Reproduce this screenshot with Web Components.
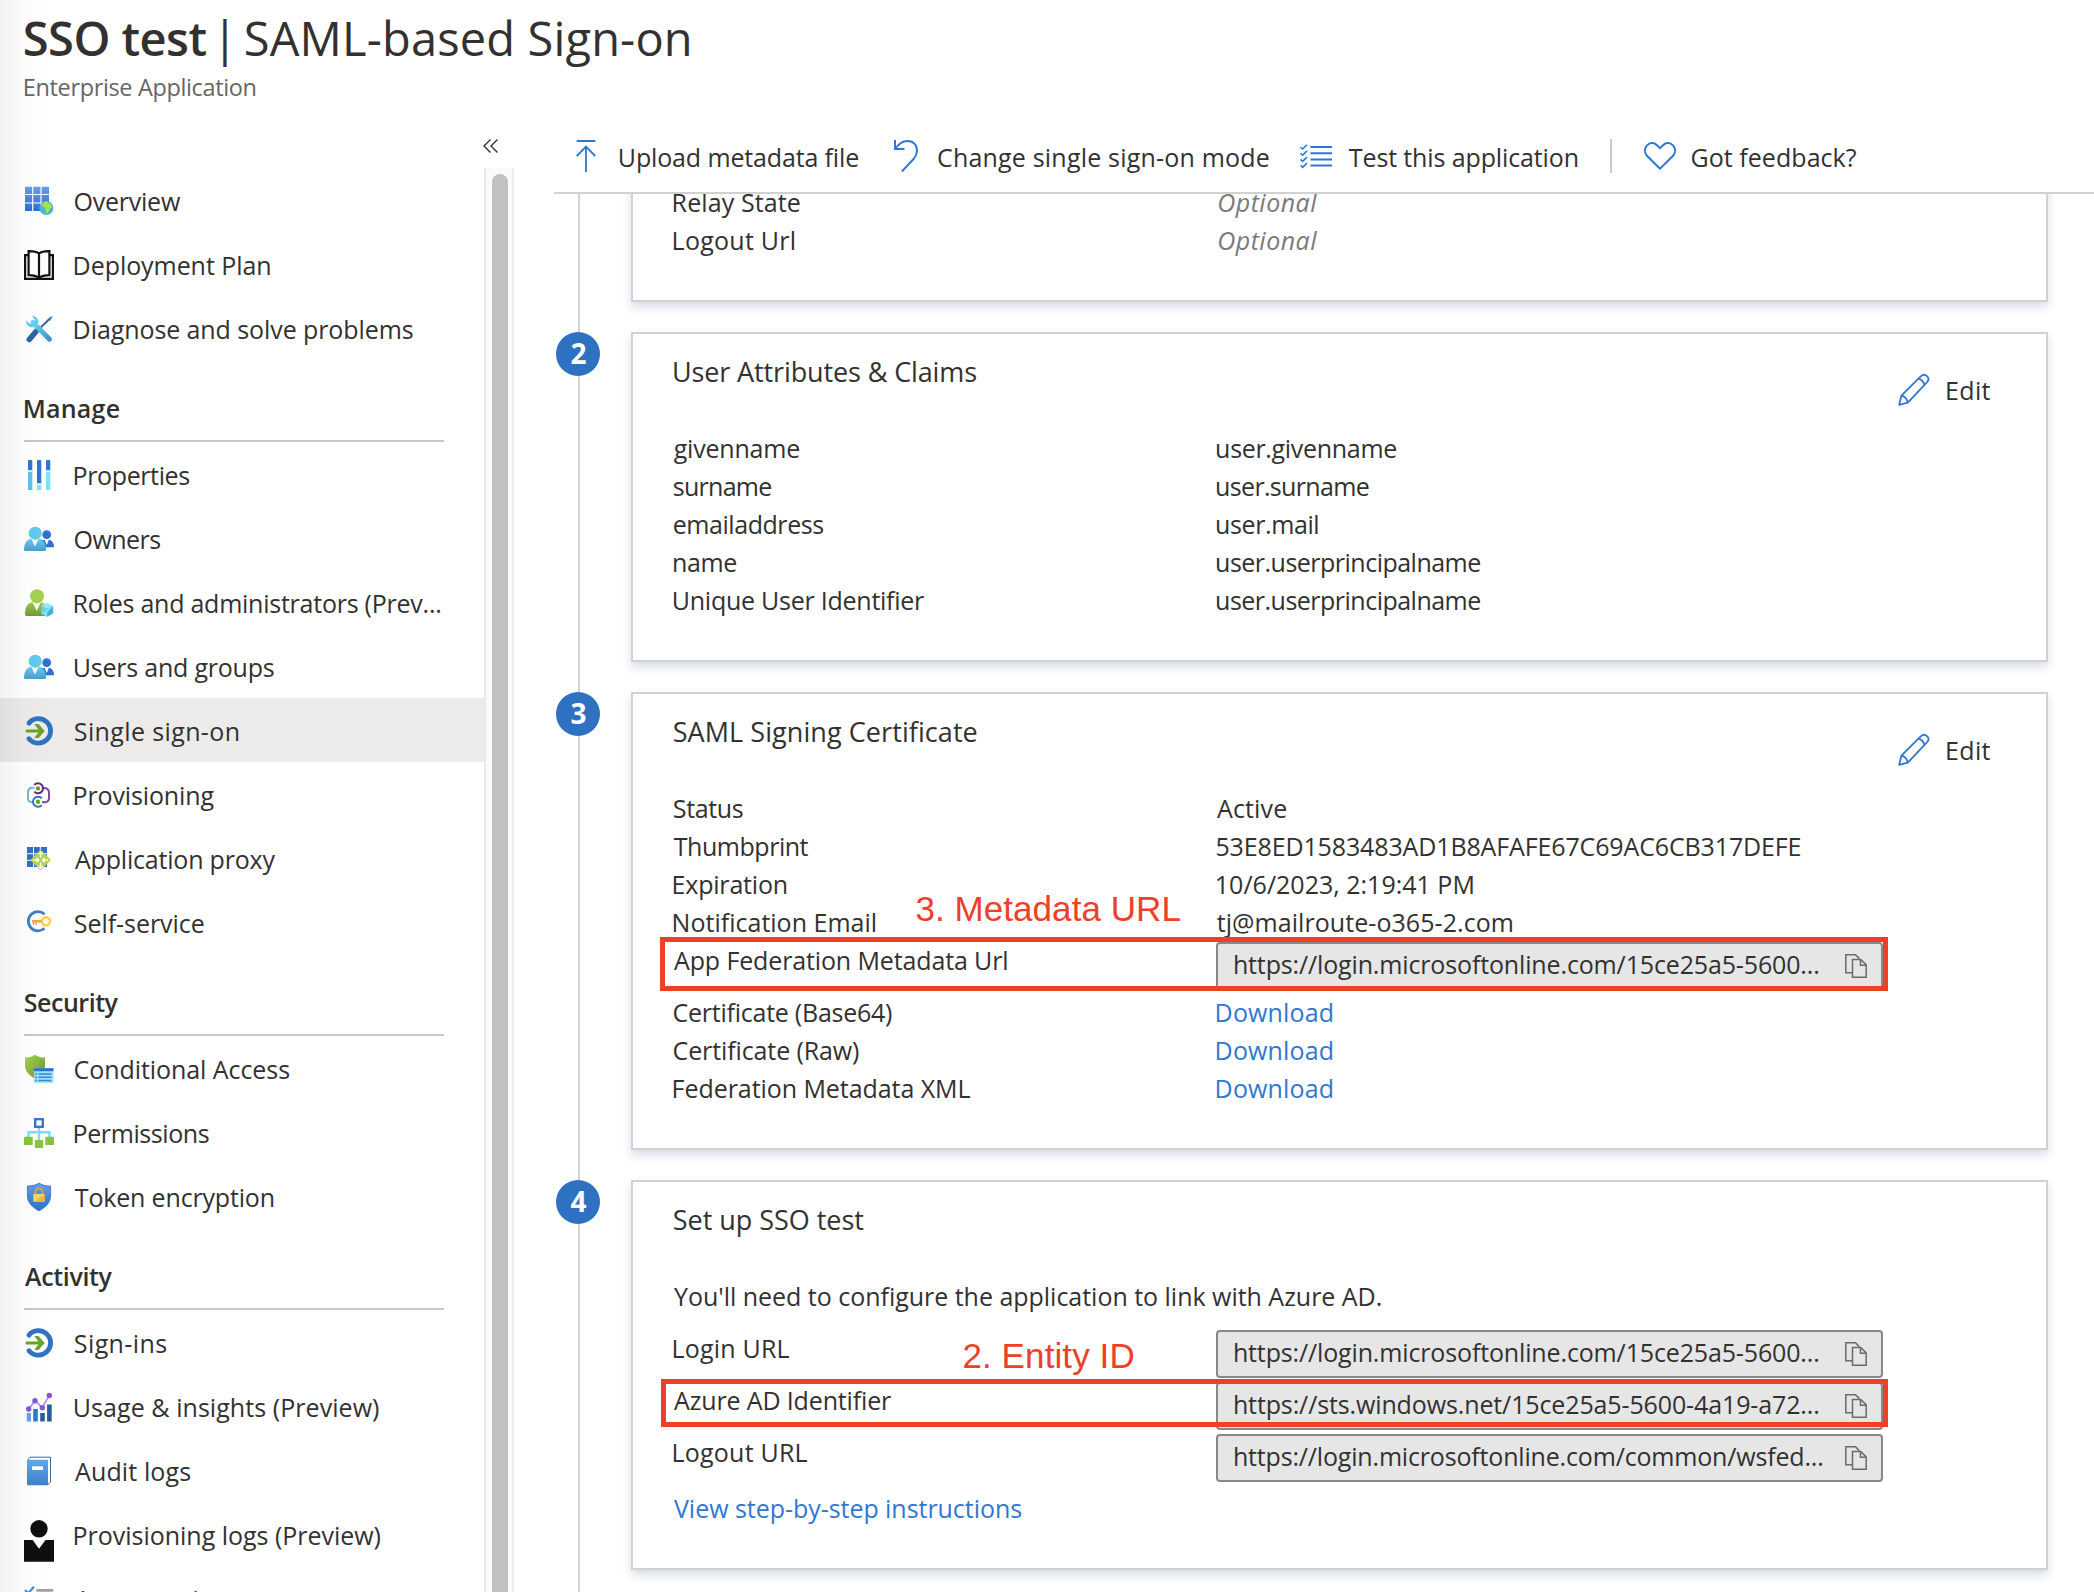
<!DOCTYPE html>
<html lang="en">
<head>
<meta charset="utf-8">
<title>SSO test | SAML-based Sign-on</title>
<style>
  html, body { margin: 0; padding: 0; background: #fff; }
  body { width: 2094px; height: 1592px; overflow: hidden; font: 400 25px/38px "Open Sans", "Noto Sans", sans-serif; color: #323130; }
</style>
</head>
<body>
<portal-blade></portal-blade>
<script>
const ICONS = {
  overview: `<defs><linearGradient id="g" x2="0" y2="1"><stop offset="0" stop-color="#6a9fea"/><stop offset="1" stop-color="#2c6fcb"/></linearGradient></defs>
    <path fill="url(#g)" d="M2 .7h22.500q.5 0 .5.5V24.500q0 .5-.5.5H1.500q-.5 0-.5-.5V1.200q0-.5.5-.5z"/>
    <path stroke="#fff" stroke-width="1.200" d="M8.700 0v26M17 0v26M0 8.500h26M0 17h26"/>
    <circle cx="22.400" cy="22" r="7" fill="#4bb4dc"/>
    <path fill="#a9e14b" d="M17.500 19c1-2 3-3.500 5-3.700 1.500.5 1 1.500 2.500 2 2 .7 3 2 3 3.700-.5 1.500-2 1-2.500 2.500-.3 2-1.500 3.500-3 4-.8-1-.5-2.500-1-3.500-.6-1.200-.2-2.500-1.500-3-.9-.5-2-.7-2.500-2z"/>`,
  book: `<g fill="none" stroke="#111" stroke-width="2.200"><path d="M4.500 5.200H1.100v23.600h27.800V5.200h-3.400"/><path d="M15 3.500C12.500 1.500 9 1 4.600 1.100v24C9 25.100 12.500 25.800 15 28c2.500-2.200 6-2.900 10.400-2.900v-24C21 1 17.500 1.500 15 3.500zV28"/></g>`,
  tools: `<defs><linearGradient id="w" x2="1" y2="1"><stop offset="0" stop-color="#6fd8f7"/><stop offset="1" stop-color="#3f94c4"/></linearGradient></defs>
    <path stroke="#2b5ea0" stroke-width="1.800" fill="none" d="M13 17 26.500 4"/><path fill="#3d86c4" d="M24 4.800 28 1.900l.5.5L26.300 7z"/>
    <path stroke="#2b62ab" stroke-width="5.500" stroke-linecap="round" d="M5.300 25.500 12 17.500"/>
    <path stroke="url(#w)" stroke-width="5" stroke-linecap="round" d="M9 8.500 25.500 25.200"/>
    <path fill="#66cdf0" d="M2.200 6.500C2 11 5 14 9.500 13.200l5-4.200C14.500 4.500 12.200 2 8 2.200L11 6 9.600 9.200 6 9.800z"/>`,
  props: `<g fill="#2f74cf"><rect x="4" width="4.300" height="10.500" rx="1"/><rect x="13" width="4.300" height="23.500" rx="1"/><rect x="22" width="4.300" height="10.500" rx="1"/></g>
    <path fill="#d9d9d9" d="M3.500 10h5.300v1.600H3.500zM12.500 23h5.300v1.600h-5.300zM21.500 10h5.300v1.600h-5.300z"/>
    <path fill="#62c3e4" d="M4 12h4.300v18H4z"/><path fill="#7be2fb" d="M13 25.200h4.300V30H13zM22 12h4.300v18H22z"/>`,
  people: `<defs><linearGradient id="p" x2="0" y2="1"><stop offset="0" stop-color="#66cdf0"/><stop offset="1" stop-color="#4a9cc8"/></linearGradient></defs>
    <circle cx="22.700" cy="10.700" r="4.400" fill="#2f72cc"/><path fill="#2f72cc" d="M16 16h10c2.600 1 4 4 4 6.500 0 .5-.3.8-.8.8H16z"/><path fill="#fff" d="m20.500 16 2.300 5 2-5z"/>
    <path fill="url(#p)" d="M5.500 15h11c3.500 1.500 5.500 6 5.500 10.500 0 1-.5 1.500-1.500 1.500h-19C.5 27 0 26.500 0 25.500 0 21 2 16.500 5.500 15z"/>
    <path fill="#fff" d="M7.300 14.500 11 22.500l3.700-8z"/><circle cx="11.200" cy="9.200" r="6.500" fill="#62c9ec"/>`,
  roles: `<defs><linearGradient id="r" x2="0" y2="1"><stop offset="0" stop-color="#9ac84a"/><stop offset="1" stop-color="#6d9a37"/></linearGradient></defs>
    <path fill="url(#r)" d="M6.500 14.500h12c3.500 1.500 5.500 6 5.500 11.500 0 1.300-.5 2-1.800 2H2.600C1.500 28 1 27.300 1 26 1 20.500 3 16 6.500 14.500z"/>
    <path fill="#fff" d="M8.500 14 12.700 23 17 14z"/><circle cx="13" cy="8.200" r="7" fill="#a3d14d"/>
    <path fill="#9be7fa" d="m23.200 14.800 6 3-6 3-6-3z"/><path fill="#66cfea" d="M17.200 18v7.500l6 3.200v-7.900z"/><path fill="#3fb2da" d="M29.200 18v7.500l-6 3.200v-7.900z"/><path fill="#84e2fb" d="m17.200 25.500 6-3.500v6.700zM29.200 18l-6 2.900v3.500z"/>`,
  signin: `<path fill="none" stroke="#3072c2" stroke-width="4.800" stroke-linecap="round" d="M5 7.100a12.200 12.200 0 1 1 0 15.600"/>
    <path fill="none" stroke="#68a22b" stroke-width="3" stroke-linecap="round" d="M3 14.900H18"/><path fill="#68a22b" d="M10.300 7.900h4.200l6.200 7-6.200 7h-4.200l5.200-7z"/>`,
  provisioning: `<path fill="none" stroke="#72b5d8" stroke-width="2" d="M10.500 7.800H8.500c-3 0-4.500 2-4.500 4.500v6c0 2.500 1.500 3.900 4 3.900"/>
    <path fill="none" stroke="#7b4a9d" stroke-width="2" d="M19 8c4.500-.3 6 2 6 4.500v5.300c0 3-1.500 4.400-4 4.400h-3"/>
    <path fill="none" stroke="#5e2d84" stroke-width="2" d="M10.300 5a5 5 0 1 1 0 6.700"/><circle cx="14" cy="8.400" r="2.200" fill="#68a22b"/>
    <path fill="none" stroke="#3072c2" stroke-width="2" d="M17.700 18.400a5 5 0 1 0 0 6.700"/><circle cx="14" cy="21.700" r="2.200" fill="#68a22b"/>`,
  proxy: `<path fill="#2f70c2" d="M3 3h20v20H3z"/><path stroke="#fff" stroke-width="1" d="M9.500 3v20M16.300 3v20M3 9.700h20M3 16.300h20"/>
    <rect x="9.200" y="8.700" width="14.800" height="14.800" rx="1" transform="rotate(45 16.600 16.100)" fill="#b5d34d"/>
    <path stroke="#fff" stroke-width="1.400" fill="none" d="M16.600 13.800V8M16.600 18.400v6M14.600 16.100H9M18.600 16.100h5.600M14.300 10.300 16.600 8l2.300 2.300M14.300 22l2.300 2.300L18.900 22M12.500 13.900l2.200 2.200-2.200 2.200M20.700 13.900l-2.200 2.200 2.200 2.200"/>`,
  selfservice: `<path fill="none" stroke="#3e7fca" stroke-width="2.800" d="M20.500 6.300a9.600 9.600 0 1 0 0 14"/>
    <path stroke="#f6a83c" stroke-width="2.600" d="M8 13.300h10"/><path stroke="#ef7d4a" stroke-width="1.300" d="M9.500 14.500v2.300M12 14.500v2.300"/>
    <circle cx="22" cy="13.300" r="4" fill="#fff" stroke="#f8cf3f" stroke-width="2.400"/>`,
  conditional: `<defs><linearGradient id="s" x2="1" y2="1"><stop offset="0" stop-color="#a3d84f"/><stop offset="1" stop-color="#6b9136"/></linearGradient></defs>
    <path fill="url(#s)" d="M11 .8c3 2.200 6.500 2.700 10 2.800v8c0 6-4.500 10-10 13C5.500 21.500 1 17.500 1 11.500v-8C4.500 3.500 8 3 11 .8z"/>
    <path fill="#9fe1fb" d="M10 14.200h19.500V29H10z"/><path fill="#2f72cc" d="M10 14.200h19.500v3H10z"/>
    <path stroke="#3a82d4" stroke-width="1.400" d="M14.500 20H27.500M14.500 23.200H27.500M14.500 26.500H27.500M11.300 20h1.700M11.300 23.200h1.700M11.300 26.500h1.700"/>`,
  permissions: `<path fill="none" stroke="#7ddcf8" stroke-width="2.400" d="M15 10v12.500M4.500 19v-4.700h21V19"/>
    <rect x="11.200" y="1.200" width="7.600" height="7.600" fill="#fff" stroke="#2f74cf" stroke-width="2.300"/>
    <g fill="#87c540"><rect y="18.700" width="8.700" height="8.300" rx=".6"/><rect x="10.900" y="22" width="8.200" height="8" rx=".6"/><rect x="21.300" y="18.700" width="8.700" height="8.300" rx=".6"/></g>`,
  token: `<defs><linearGradient id="t" x2="0" y2="1"><stop offset="0" stop-color="#6a9de8"/><stop offset="1" stop-color="#2c70cc"/></linearGradient></defs>
    <path fill="url(#t)" stroke="#2e6fc9" stroke-width=".8" d="M15 1.100c3.500 2.400 7.500 2.900 11.600 3V14c0 6.800-5.400 11.500-11.600 14.900C8.800 25.500 3.400 20.800 3.400 14V4.100C7.500 4 11.500 3.500 15 1.100z"/>
    <path fill="none" stroke="#d9a93a" stroke-width="1.800" d="M11.500 12.500v-2.600a3.500 3.500 0 0 1 7 0v2.600"/><rect x="9.300" y="12" width="11.200" height="7.700" rx=".6" fill="#fad661"/><path fill="#f3b93c" d="M20.500 12v7.700H10z"/>`,
  usage: `<path fill="#6d9fe8" d="M2.700 21H7v8.500H2.700z"/><path fill="#2f74cf" d="M9.200 17h4.600v12.500H9.200z"/><path fill="#245c9e" d="M16.200 21h4.600v8.500h-4.600zM23.100 12.400h4.600v17.100h-4.600z"/>
    <path fill="none" stroke="#ab90ea" stroke-width="1.700" d="m4.700 17 6.300-8.300 7.300 7 7-12.400"/><g fill="#8557d8"><circle cx="4.700" cy="17" r="2.700"/><circle cx="11" cy="8.700" r="2.700"/><circle cx="18.300" cy="15.700" r="2.700"/><circle cx="25.300" cy="3.500" r="2.700"/></g>`,
  audit: `<defs><linearGradient id="a" x2="0" y2="1"><stop offset="0" stop-color="#62a9e8"/><stop offset="1" stop-color="#3c80cd"/></linearGradient></defs>
    <path fill="#fff" stroke="#3567a8" stroke-width="1" d="M3.500 4.500 6 1.200h20.500V26l-3 3z"/>
    <path fill="url(#a)" d="M3 3.700h21V29.300H4q-1 0-1-1z"/><path fill="#fff" d="M8 10.300h11v3.700H8z"/>`,
  person: `<circle cx="15" cy="8.800" r="8.700" fill="#0f0f0f"/><path fill="#0f0f0f" d="M0 20h8.700L15 28.700 21.500 20H30v21.800H0z"/>`,
  reviews: `<path fill="none" stroke="#4a8ad8" stroke-width="2.200" d="m1 6 3.200 3.200L10 2.800"/><path stroke="#a0a0a0" stroke-width="2.800" stroke-linecap="round" d="M13.500 6.400H28"/>`,
  upload: `<path fill="none" stroke="#2f77d2" stroke-width="2" d="M.7 1h18.600"/><path fill="none" stroke="#2f77d2" stroke-width="1.800" d="M10 32V6.800M.8 16 10 6.500 19.200 16"/>`,
  undo: `<path fill="none" stroke="#2f77d2" stroke-width="2" d="M1 0v9h9.500M1.500 8.500C5 3.500 9 .9 13.500 1 19.500 1.200 23.100 5 23 11c-.1 3-1 5-3 7.500L7.800 31.600"/>`,
  checklist: `<path fill="none" stroke="#2f77d2" stroke-width="2" d="M10.500 3h21.500M10.500 9.200h21.500M10.500 15.400h21.500M10.500 21.400h21.500"/><path fill="none" stroke="#2f77d2" stroke-width="1.600" d="M.6 3 2.600 5 7 .7M.6 9.200l2 2L7 6.900M.6 15.400l2 2L7 13.100M.6 21.400l2 2L7 19.100"/>`,
  heart: `<path fill="none" stroke="#2f77d2" stroke-width="2" d="M16 26.700 3.200 14C.3 10.800.3 6.500 2.800 3.600 5.800.3 10.200.3 13 3.200l3 3 3-3c2.800-2.900 7.200-2.900 10.200.4 2.500 2.900 2.500 7.200-.4 10.400z"/>`,
  pencil: `<path fill="none" stroke="#2f77d2" stroke-width="1.800" stroke-linejoin="round" d="M1.200 30.800 3.400 21.700 23 2.200c1.800-1.700 4.200-1.700 6 0s1.800 4.200.1 6L9.800 28.600zM3.400 21.700c3.200.6 5.500 3.200 6.400 6.900M20.500 4.700c3 .8 5 3 5.800 6"/>`,
  copy: `<g fill="none" stroke="#6b6b6b" stroke-width="1.500"><path d="M7.500 18.800H.8V.8h9.700l3.800 3.800"/><path d="M7.500 5.500h8.300l5.400 5.400v12.300H7.500zM15.500 5.800v5.400h5.500"/></g>`,
  collapse: `<path fill="none" stroke="#323130" stroke-width="1.400" d="M7.500.5 1 7l6.500 6.500M14.500.5 8 7l6.500 6.500"/>`
};

const define = (tag, html, setup) => {
  const template = document.createElement('template');
  template.innerHTML = html;
  customElements.define(tag, class extends HTMLElement {
    connectedCallback() {
      if (this.shadowRoot) return;
      const root = this.attachShadow({ mode: 'open' });
      root.append(template.content.cloneNode(true));
      if (setup) setup(this, root);
    }
  });
};

/* Inline drawing: <ui-icon name w h> */
define('ui-icon', `<style>:host{display:block;flex:none}svg{display:block;overflow:visible}</style><svg></svg>`, (el, root) => {
  const w = el.getAttribute('w') || 30, h = el.getAttribute('h') || 30;
  const svg = root.querySelector('svg');
  svg.setAttribute('viewBox', `0 0 ${w} ${h}`);
  svg.setAttribute('width', w);
  svg.setAttribute('height', h);
  svg.innerHTML = ICONS[el.getAttribute('name')];
});

/* One line of text whose tracking is tuned so that its ink spans exactly w pixels.
   Measured at ten times the size, where glyph bounds are not rounded to whole pixels. */
const ctx = document.createElement('canvas').getContext('2d');
define('fit-text', `<style>:host{display:block;white-space:nowrap;flex:none}span{display:inline-block;font-variant-ligatures:none}</style><span><slot></slot></span>`, (el, root) => {
  const w = parseFloat(el.getAttribute('w')), text = el.textContent, cs = getComputedStyle(el);
  const span = root.querySelector('span');
  ctx.font = `${cs.fontStyle} ${cs.fontWeight} ${parseFloat(cs.fontSize) * 10}px ${cs.fontFamily}`;
  ctx.letterSpacing = '-5px';
  const m = ctx.measureText(text), n = text.length - 1;
  const ink = (m.actualBoundingBoxLeft + m.actualBoundingBoxRight) / 10 + 0.5 * n;
  el.style.width = w + 'px';
  if (n > 0) span.style.letterSpacing = ((w - ink) / n).toFixed(3) + 'px';
  span.style.marginLeft = (m.actualBoundingBoxLeft / 10).toFixed(2) + 'px';
});

customElements.define('nav-entry', class extends HTMLElement {
  connectedCallback() {
    if (this.shadowRoot) return;
    this.attachShadow({ mode: 'open' }).innerHTML = `<style>
      :host{display:flex;align-items:center;height:62px;padding:2px 0 0 24px;gap:21px}
      :host([selected]){background:#ecebe9}
    </style><ui-icon name="${this.getAttribute('icon')}"></ui-icon><fit-text w="${this.getAttribute('w')}">${this.textContent.replace('&', '&amp;')}</fit-text>`;
  }
});

customElements.define('nav-heading', class extends HTMLElement {
  connectedCallback() {
    if (this.shadowRoot) return;
    this.attachShadow({ mode: 'open' }).innerHTML = `<style>
      :host{display:block;box-sizing:border-box;height:82px;width:420px;margin-left:24px;padding:29px 0 0 1px;border-bottom:2px solid #c8c8c8;font-weight:600;line-height:38px}
    </style><fit-text w="${this.getAttribute('w')}">${this.textContent}</fit-text>`;
  }
});

define('side-nav', `<style>
  :host{display:flex;flex-direction:column;width:514px;height:1472px;flex:none;overflow:hidden}
  .top{height:48px;display:flex;justify-content:flex-end;padding:19px 15px 0 0;box-sizing:border-box;flex:none}
  .body{display:flex;flex:1;min-height:0}
  nav{width:484px;border-right:2px solid #e9e9e9;overflow:hidden}
  .track{width:16px;background:#fafafa;border-right:2px solid #ededed;padding:6px 4px 0 6px}
  .thumb{height:1500px;border-radius:8px;background:#c1c1c1}
</style>
<div class="top"><ui-icon name="collapse" w="16" h="14"></ui-icon></div>
<div class="body"><nav><slot></slot></nav><div class="track"><div class="thumb"></div></div></div>`);

customElements.define('tool-button', class extends HTMLElement {
  connectedCallback() {
    if (this.shadowRoot) return;
    const a = n => this.getAttribute(n);
    this.attachShadow({ mode: 'open' }).innerHTML = `<style>
      :host{display:flex;align-items:center;gap:${a('gap')}px;flex:none}
      fit-text{padding-top:1px}
    </style><ui-icon name="${a('icon')}" w="${a('iw')}" h="${a('ih')}"></ui-icon><fit-text w="${a('w')}">${this.textContent}</fit-text>`;
  }
});

define('command-bar', `<style>
  :host{display:flex;align-items:center;height:72px;border-bottom:2px solid #d1d1d1;padding-left:22px;box-sizing:content-box}
</style><slot></slot>`);

customElements.define('url-field', class extends HTMLElement {
  connectedCallback() {
    if (this.shadowRoot) return;
    this.attachShadow({ mode: 'open' }).innerHTML = `<style>
      :host{display:flex;align-items:center;justify-content:space-between;box-sizing:border-box;width:667px;height:48px;border:2px solid #8a8886;border-radius:4px;background:#e6e6e6;padding:0 14px 0 17px;margin-left:-1px}
      fit-text{line-height:44px;margin-top:-5px}
    </style><fit-text w="${this.getAttribute('w')}">${this.textContent}</fit-text><ui-icon name="copy" w="22" h="24"></ui-icon>`;
  }
});

/* Label on the left, slotted value on the right. */
customElements.define('prop-row', class extends HTMLElement {
  connectedCallback() {
    if (this.shadowRoot) return;
    this.attachShadow({ mode: 'open' }).innerHTML = `<style>
      :host{display:grid;grid-template-columns:543px 1fr;height:38px;align-items:start;line-height:37px}
      :host([tall]){height:52px}
      ::slotted(.optional){font-style:italic;color:#7a7a7a;margin-left:2px}
      ::slotted(.link){color:#2f77d2}
    </style><fit-text w="${this.getAttribute('w')}">${this.getAttribute('label')}</fit-text><slot></slot>`;
  }
});

customElements.define('step-card', class extends HTMLElement {
  connectedCallback() {
    if (this.shadowRoot) return;
    const n = this.getAttribute('step'), title = this.getAttribute('heading');
    this.attachShadow({ mode: 'open' }).innerHTML = `<style>
      :host{display:grid;grid-template-columns:77px 1417px;padding-bottom:30px}
      .badge{box-sizing:border-box;width:44px;height:44px;padding-left:1px;margin-left:2px;border-radius:50%;background:#2f71c1;color:#fff;font-weight:700;font-size:28px;line-height:42px;text-align:center}
      section{box-sizing:border-box;border:2px solid #d1d1d1;background:#fff;box-shadow:0 5px 9px rgba(60,80,130,.2);padding:0 0 40px 41px}
      header{height:96px;display:flex;justify-content:space-between;align-items:flex-start;padding-right:56px;box-sizing:border-box}
      header>fit-text{font-size:27px;padding-top:19px}
      header>tool-button{padding-top:36px}
      .plain{height:16px}
    </style>
    <div>${n ? `<div class="badge">${n}</div>` : ''}</div>
    <section>${title ? `<header><fit-text w="${this.getAttribute('w')}">${title.replace('&', '&amp;')}</fit-text>${this.hasAttribute('editable') ? '<tool-button icon="pencil" iw="32" ih="32" gap="18" w="42.5">Edit</tool-button>' : ''}</header>` : '<div class="plain"></div>'}<slot></slot></section>`;
  }
});

/* Red call-out drawn on top of the page. */
customElements.define('call-out', class extends HTMLElement {
  connectedCallback() {
    if (this.shadowRoot) return;
    const a = n => this.getAttribute(n);
    this.attachShadow({ mode: 'open' }).innerHTML = `<style>
      :host{position:absolute;left:${a('x')}px;top:${a('y')}px;width:${a('bw')}px;height:${a('bh')}px;box-sizing:border-box;border:5px solid #ed4026;color:#ed4026;font-family:"Liberation Sans",Arial,sans-serif;font-size:35px;line-height:40px}
      fit-text{position:absolute;left:${a('tx')}px;top:${a('ty')}px}
    </style><fit-text w="${a('w')}">${this.textContent}</fit-text>`;
  }
});

define('portal-blade', `<style>
  :host{display:block;position:relative;width:2094px;height:1592px;overflow:hidden;background:#fff}
  .title{height:120px;box-sizing:border-box;padding:6px 0 0 25px}
  h1{margin:0;display:flex;align-items:center;font-size:47px;line-height:64px;font-weight:400}
  h1 b{font-weight:600;display:block}
  .sub{font-size:23.500px;line-height:32px;color:#666;padding-top:1px}
  .body{display:flex}
  main{flex:1;margin-left:40px;min-width:0}
  .sep{width:2px;height:34px;background:#c8c8c8;margin:0 32px 0 33px}
  .scroll{height:1398px;overflow:hidden;background:linear-gradient(#d1d1d1,#d1d1d1) 24px 0/2px 100% no-repeat}
  .steps{margin-top:-28px}
  .gap{height:14px}
  .link{color:#2f77d2}
  .line{line-height:37px;height:38px}
  .edge{position:absolute;left:0;top:0;width:46px;height:100%;background:linear-gradient(90deg,rgba(0,0,0,.05),rgba(0,0,0,.015) 50%,rgba(0,0,0,0))}
</style>
<div class="title">
  <h1><b><fit-text w="181">SSO test</fit-text></b><fit-text w="3" style="margin:0 20px 0 17px">|</fit-text><fit-text w="443.500">SAML-based Sign-on</fit-text></h1>
  <div class="sub"><fit-text w="230">Enterprise Application</fit-text></div>
</div>
<div class="body">
  <side-nav>
    <nav-entry icon="overview" w="105">Overview</nav-entry>
    <nav-entry icon="book" w="194.500">Deployment Plan</nav-entry>
    <nav-entry icon="tools" w="337.500">Diagnose and solve problems</nav-entry>
    <nav-heading w="94">Manage</nav-heading>
    <nav-entry icon="props" w="114">Properties</nav-entry>
    <nav-entry icon="people" w="85">Owners</nav-entry>
    <nav-entry icon="roles" w="365">Roles and administrators (Prev...</nav-entry>
    <nav-entry icon="people" w="198.500">Users and groups</nav-entry>
    <nav-entry icon="signin" w="163" selected>Single sign-on</nav-entry>
    <nav-entry icon="provisioning" w="138.500">Provisioning</nav-entry>
    <nav-entry icon="proxy" w="200">Application proxy</nav-entry>
    <nav-entry icon="selfservice" w="128.500">Self-service</nav-entry>
    <nav-heading w="93">Security</nav-heading>
    <nav-entry icon="conditional" w="214">Conditional Access</nav-entry>
    <nav-entry icon="permissions" w="133.500">Permissions</nav-entry>
    <nav-entry icon="token" w="198">Token encryption</nav-entry>
    <nav-heading w="87">Activity</nav-heading>
    <nav-entry icon="signin" w="91">Sign-ins</nav-entry>
    <nav-entry icon="usage" w="303.500">Usage & insights (Preview)</nav-entry>
    <nav-entry icon="audit" w="115">Audit logs</nav-entry>
    <nav-entry icon="person" w="305">Provisioning logs (Preview)</nav-entry>
    <nav-entry icon="reviews" w="167">Access reviews</nav-entry>
  </side-nav>
  <main>
    <command-bar>
      <tool-button icon="upload" iw="20" ih="32" gap="24" w="238">Upload metadata file</tool-button>
      <tool-button icon="undo" iw="24" ih="32" gap="20.500" w="330" style="margin-left:36px">Change single sign-on mode</tool-button>
      <tool-button icon="checklist" iw="32" ih="24" gap="17" w="228" style="margin-left:31.500px">Test this application</tool-button>
      <div class="sep"></div>
      <tool-button icon="heart" iw="32" ih="28" gap="16" w="164">Got feedback?</tool-button>
    </command-bar>
    <div class="scroll"><div class="steps">
      <step-card>
        <prop-row label="Relay State" w="125.500"><fit-text class="optional" w="98">Optional</fit-text></prop-row>
        <prop-row label="Logout Url" w="120"><fit-text class="optional" w="98">Optional</fit-text></prop-row>
      </step-card>
      <step-card step="2" heading="User Attributes & Claims" w="302" editable>
        <prop-row label="givenname" w="125"><fit-text w="179">user.givenname</fit-text></prop-row>
        <prop-row label="surname" w="97"><fit-text w="151.500">user.surname</fit-text></prop-row>
        <prop-row label="emailaddress" w="149"><fit-text w="100.500">user.mail</fit-text></prop-row>
        <prop-row label="name" w="62"><fit-text w="263">user.userprincipalname</fit-text></prop-row>
        <prop-row label="Unique User Identifier" w="250"><fit-text w="263">user.userprincipalname</fit-text></prop-row>
      </step-card>
      <step-card step="3" heading="SAML Signing Certificate" w="302.500" editable>
        <prop-row label="Status" w="68.500"><fit-text w="69">Active</fit-text></prop-row>
        <prop-row label="Thumbprint" w="134"><fit-text w="583">53E8ED1583483AD1B8AFAFE67C69AC6CB317DEFE</fit-text></prop-row>
        <prop-row label="Expiration" w="112"><fit-text w="255.500">10/6/2023, 2:19:41 PM</fit-text></prop-row>
        <prop-row label="Notification Email" w="201"><fit-text w="295">tj@mailroute-o365-2.com</fit-text></prop-row>
        <prop-row label="App Federation Metadata Url" w="332.500" tall><url-field w="583">https://login.microsoftonline.com/15ce25a5-5600...</url-field></prop-row>
        <prop-row label="Certificate (Base64)" w="217.500"><fit-text class="link" w="115">Download</fit-text></prop-row>
        <prop-row label="Certificate (Raw)" w="184.500"><fit-text class="link" w="115">Download</fit-text></prop-row>
        <prop-row label="Federation Metadata XML" w="296"><fit-text class="link" w="115">Download</fit-text></prop-row>
      </step-card>
      <step-card step="4" heading="Set up SSO test" w="189.500">
        <fit-text class="line" w="706.500">You'll need to configure the application to link with Azure AD.</fit-text>
        <div class="gap"></div>
        <prop-row label="Login URL" w="115" tall><url-field w="583">https://login.microsoftonline.com/15ce25a5-5600...</url-field></prop-row>
        <prop-row label="Azure AD Identifier" w="217" tall><url-field w="583">https://sts.windows.net/15ce25a5-5600-4a19-a72...</url-field></prop-row>
        <prop-row label="Logout URL" w="133" tall><url-field w="587">https://login.microsoftonline.com/common/wsfed...</url-field></prop-row>
        <div style="height:4px"></div>
        <fit-text class="line link" w="347">View step-by-step instructions</fit-text>
      </step-card>
    </div></div>
  </main>
</div>
<call-out x="660" y="937" bw="1228" bh="54" tx="251.500" ty="-53" w="263.500">3. Metadata URL</call-out>
<call-out x="661" y="1379" bw="1227" bh="48" tx="298" ty="-48" w="169.500">2. Entity ID</call-out>
<div class="edge"></div>`);
</script>
</body>
</html>
